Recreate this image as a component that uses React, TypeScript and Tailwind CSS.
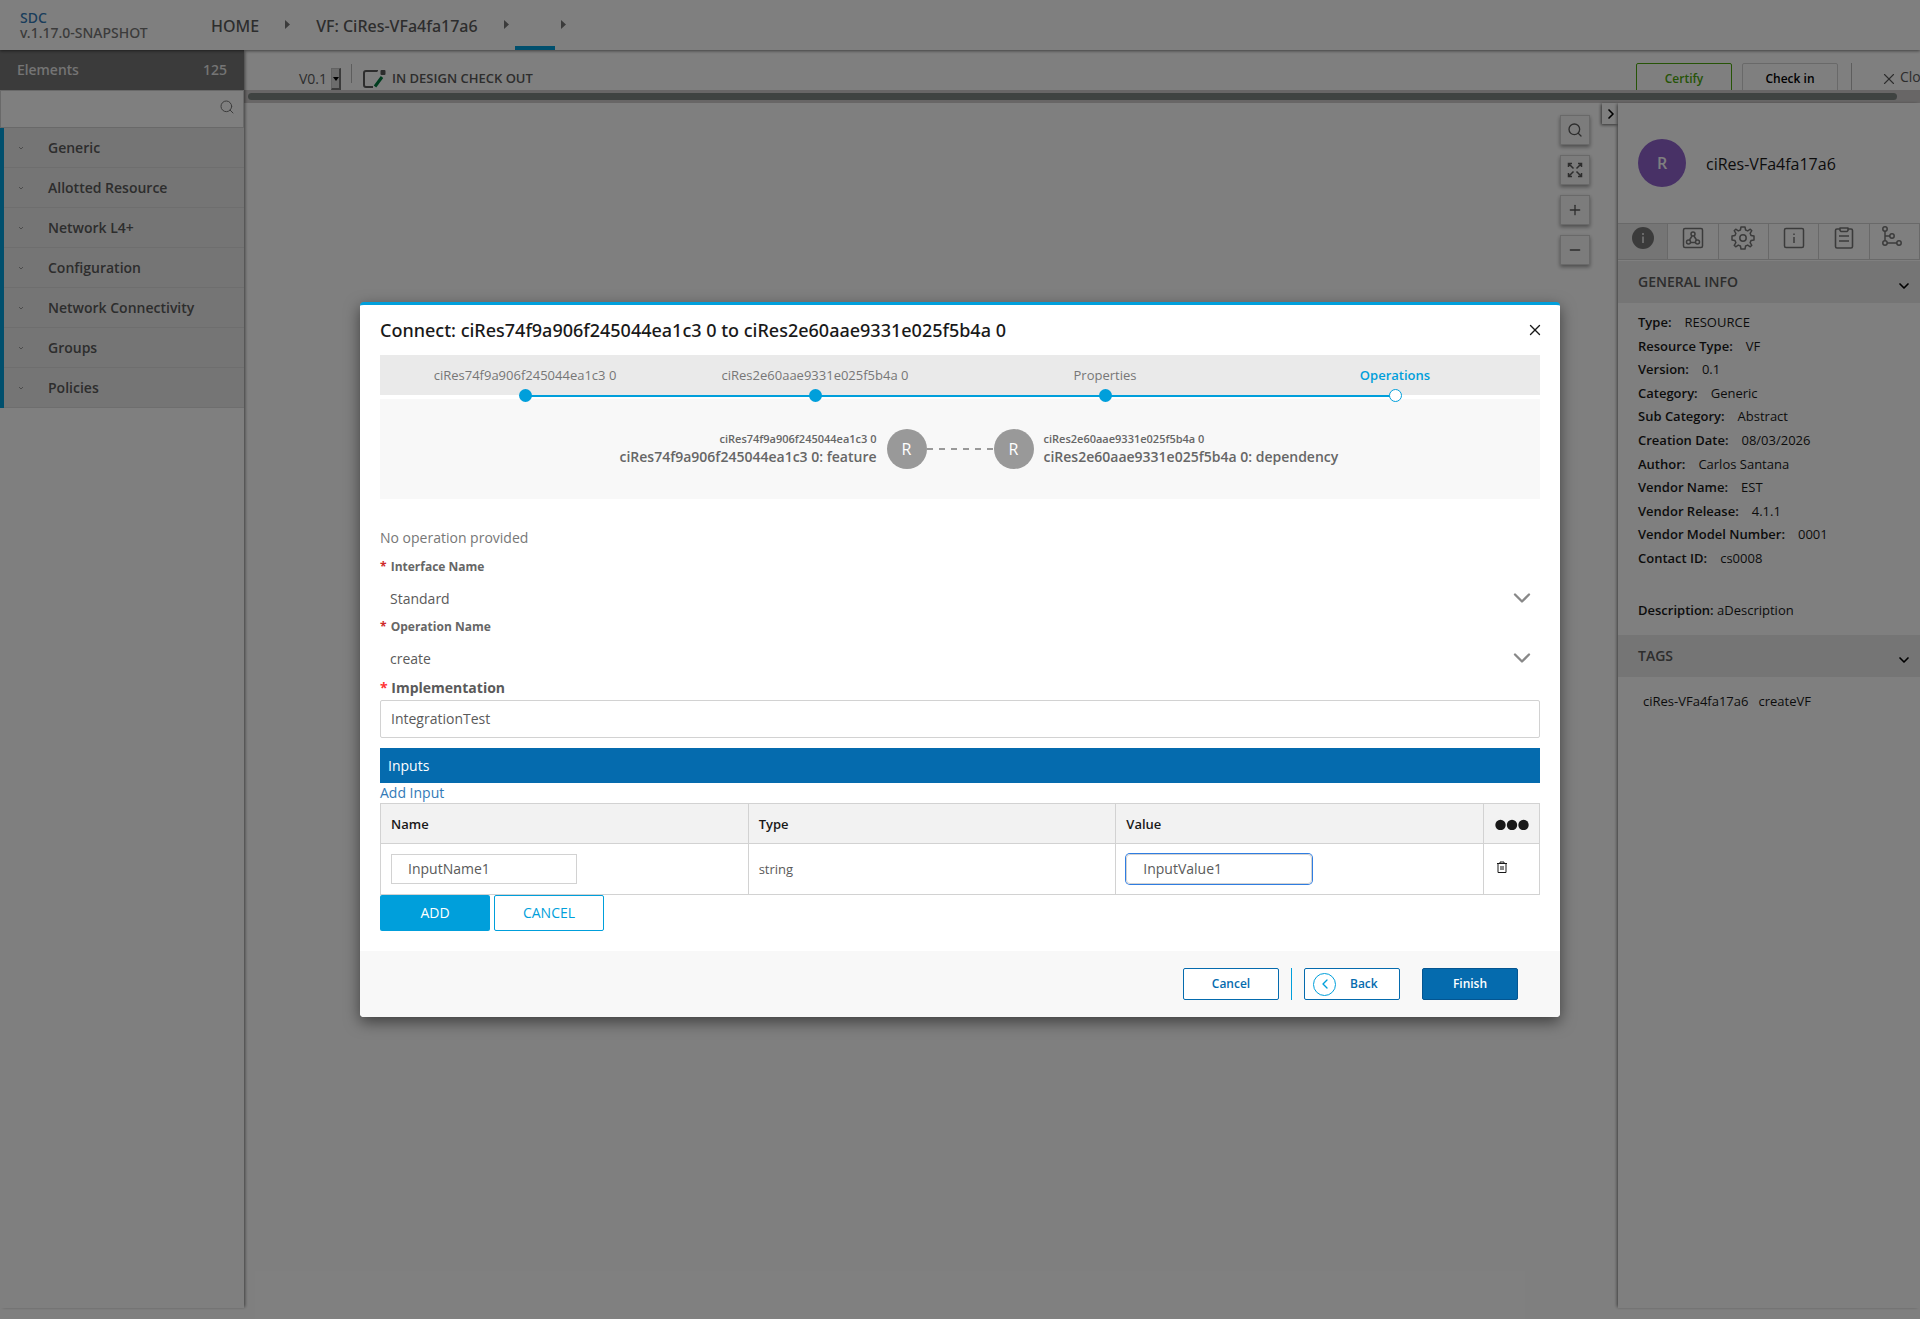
import React from 'react';
import {
  ChevronDown,
  ChevronLeft,
  ChevronRight,
  Minus,
  Plus,
  Search,
  X,
} from 'lucide-react';

const categories = [
  'Generic',
  'Allotted Resource',
  'Network L4+',
  'Configuration',
  'Network Connectivity',
  'Groups',
  'Policies',
];

const generalInfo = [
  { label: 'Type:', value: 'RESOURCE' },
  { label: 'Resource Type:', value: 'VF' },
  { label: 'Version:', value: '0.1' },
  { label: 'Category:', value: 'Generic' },
  { label: 'Sub Category:', value: 'Abstract' },
  { label: 'Creation Date:', value: '08/03/2026' },
  { label: 'Author:', value: 'Carlos Santana' },
  { label: 'Vendor Name:', value: 'EST' },
  { label: 'Vendor Release:', value: '4.1.1' },
  { label: 'Vendor Model Number:', value: '0001' },
  { label: 'Contact ID:', value: 'cs0008' },
];

const steps = [
  'ciRes74f9a906f245044ea1c3 0',
  'ciRes2e60aae9331e025f5b4a 0',
  'Properties',
  'Operations',
];

const Arrow: React.FC = () => (
  <svg className="-mt-0.5 h-[9px] w-[5px] shrink-0 fill-[#777]" viewBox="0 0 5 9">
    <path d="M0 0L5 4.500L0 9Z" />
  </svg>
);

const Header: React.FC = () => (
  <header className="relative z-20 flex h-[50px] shrink-0 items-center bg-white font-['Noto_Sans',sans-serif] font-medium shadow-[0_1px_3px_rgba(0,0,0,0.5)]">
    <div className="w-[211px] shrink-0 pl-5 text-sm leading-[15px] text-[#777]">
      <a href="#" className="block text-[#337ab7]">SDC</a>
      <span className="block">v.1.17.0-SNAPSHOT</span>
    </div>
    <nav className="flex h-full items-center text-base text-[#5a5a5a]">
      <a href="#" className="mr-[26px] pt-0.5">HOME</a>
      <Arrow />
      <a href="#" className="mx-[26px] pt-0.5">VF: CiRes-VFa4fa17a6</a>
      <Arrow />
      <span className="mx-1.5 h-full w-10 border-b-4 border-[#009fdb]" />
      <Arrow />
    </nav>
  </header>
);

const Sidebar: React.FC = () => (
  <aside className="relative z-10 flex w-[244px] shrink-0 flex-col bg-white shadow-[2px_0_3px_-1px_rgba(0,0,0,0.5)]">
    <div className="flex h-10 items-center justify-between bg-[#777] px-[17px] font-['Noto_Sans',sans-serif] text-sm font-medium text-[#eaeaea]">
      <span>Elements</span>
      <span>125</span>
    </div>
    <label className="flex h-[38px] items-center border border-[#d2d2d2] pr-2 pb-1">
      <input type="text" aria-label="Search elements" className="min-w-0 flex-1 px-3 text-sm outline-none" />
      <Search className="size-4 text-[#777]" strokeWidth={1.5} />
    </label>
    <ul className="border-l-4 border-[#009fdb]">
      {categories.map((name) => (
        <li key={name} className="flex h-10 items-center border-b border-[#dcdcdc] bg-[#eaeaea] pl-[15px] text-sm font-semibold text-[#5a5a5a]">
          <svg className="mr-[25px] h-1 w-1 fill-none stroke-[#999]" viewBox="0 0 4 4">
            <path d="M0 1L2 3L4 1" />
          </svg>
          {name}
        </li>
      ))}
    </ul>
  </aside>
);

const Toolbar: React.FC = () => (
  <div className="h-10 shrink-0 overflow-hidden">
    <div className="flex h-[57px] items-center pl-[55px]">
      <label htmlFor="version" className="text-sm text-[#5a5a5a]">V0.1</label>
      <div className="relative ml-1">
        <select id="version" className="block h-[22px] w-2.5 appearance-none border border-r-2 border-b-2 border-[#c4c4c4] border-r-[#777] border-b-[#777] bg-[#d8d8d8]" />
        <svg className="pointer-events-none absolute top-[9px] left-0.5 h-1 w-1.5 fill-black" viewBox="0 0 6 4">
          <path d="M0 0H6L3 4Z" />
        </svg>
      </div>
      <span className="mx-2.5 mb-2.5 h-[19px] w-px bg-[#bbb]" />
      <svg className="mr-1.5 h-5 w-6" viewBox="0 0 24 20" fill="none">
        <path d="M15 2.500V2H4Q2 2 2 4V16Q2 18 4 18H11" stroke="#5a5a5a" strokeWidth="2" />
        <path d="M13 17.500L20 8" stroke="#007a3e" strokeWidth="3" />
        <rect x="18.500" y="1" width="5" height="5" rx="1" fill="#5a5a5a" />
      </svg>
      <span className="text-[13px] font-semibold text-[#5a5a5a]">IN DESIGN CHECK OUT</span>
      <div className="ml-auto flex items-center">
        <button type="button" className="h-8 w-24 rounded-xs border border-[#4ca90c] text-xs font-semibold text-[#4ca90c]">Certify</button>
        <button type="button" className="ml-2.5 h-8 w-24 rounded-xs border border-[#d2d2d2] text-xs font-semibold text-black">Check in</button>
        <span className="ml-[13px] h-8 w-px bg-[#bbb]" />
        <button type="button" className="mb-1 ml-7 flex w-10 items-center gap-0.5 text-sm whitespace-nowrap text-[#5a5a5a]">
          <X className="mt-1 size-[18px] shrink-0" strokeWidth={1.5} />
          Close
        </button>
      </div>
    </div>
  </div>
);

const canvasButton =
  'flex size-[30px] items-center justify-center border border-[#d2d2d2] bg-[#f8f8f8] text-[#5a5a5a] shadow-[0_2px_4px_rgba(0,0,0,0.4)]';

const CanvasTools: React.FC = () => (
  <div className="flex flex-col gap-2.5 pt-3">
    <button type="button" aria-label="Search" className={canvasButton}>
      <Search className="size-4" strokeWidth={2} />
    </button>
    <button type="button" aria-label="Fit" className={canvasButton}>
      <svg className="size-4" viewBox="0 0 16 16" fill="none" stroke="currentColor" strokeWidth="1.500">
        <path d="M1.500 5V1.500H5M11 1.500H14.500V5M14.500 11V14.500H11M5 14.500H1.500V11M2 2L6.500 6.500M14 2L9.500 6.500M14 14L9.500 9.500M2 14L6.500 9.500" />
      </svg>
    </button>
    <button type="button" aria-label="Zoom in" className={canvasButton}>
      <Plus className="size-4" strokeWidth={2} />
    </button>
    <button type="button" aria-label="Zoom out" className={canvasButton}>
      <Minus className="size-4" strokeWidth={2} />
    </button>
  </div>
);

const tabIcons = [
  <svg key="info" className="size-6" viewBox="0 0 24 24">
    <circle cx="12" cy="12" r="11" fill="#777" />
    <path d="M12 10.500V17M12 7V9" stroke="#eaeaea" strokeWidth="1.600" />
  </svg>,
  <svg key="composition" className="size-6" viewBox="0 0 24 24" fill="none" stroke="#777" strokeWidth="1.500">
    <rect x="2.500" y="2.500" width="19" height="19" rx="1.500" />
    <circle cx="12" cy="8" r="2" />
    <circle cx="7.500" cy="16" r="2" />
    <circle cx="16.500" cy="16" r="2" />
    <path d="M11 10L8.500 14M13 10L15.500 14M9.500 16.500H14.500" />
  </svg>,
  <svg key="settings" className="size-6" viewBox="0 0 24 24" fill="none" stroke="#777" strokeWidth="1.500" strokeLinejoin="round">
    <circle cx="12" cy="12" r="3.200" />
    <path d="M10 1H14L14.600 4L16.700 4.900L19.300 3.200L20.800 4.700L19.100 7.300L20 9.400L23 10V14L20 14.600L19.100 16.700L20.800 19.300L19.300 20.800L16.700 19.100L14.600 20L14 23H10L9.400 20L7.300 19.100L4.700 20.800L3.200 19.300L4.900 16.700L4 14.600L1 14V10L4 9.400L4.900 7.300L3.200 4.700L4.700 3.200L7.300 4.900L9.400 4Z" />
  </svg>,
  <svg key="details" className="size-6" viewBox="0 0 24 24" fill="none" stroke="#777" strokeWidth="1.500">
    <rect x="2.500" y="2.500" width="19" height="19" rx="1.500" />
    <path d="M12 11V17M12 7.500V9" />
  </svg>,
  <svg key="requirements" className="size-6" viewBox="0 0 24 24" fill="none" stroke="#777" strokeWidth="1.600" strokeLinejoin="round">
    <path d="M8 3H5Q3.500 3 3.500 4.500V20.500Q3.500 22 5 22H19Q20.500 22 20.500 20.500V4.500Q20.500 3 19 3H16" />
    <path d="M8 2H16V4.500L15 5.500H9L8 4.500ZM7 10H17M7 15H17" />
  </svg>,
  <svg key="relations" className="size-6" viewBox="0 0 24 24" fill="none" stroke="#777" strokeWidth="1.500">
    <circle cx="3" cy="3" r="2.200" />
    <circle cx="3" cy="17" r="2.200" />
    <circle cx="17" cy="17" r="2.200" />
    <circle cx="10" cy="10" r="2.200" />
    <path d="M3 5V15M3 10H8M5 17H15" />
  </svg>,
];

const SectionTitle: React.FC<{ title: string }> = ({ title }) => (
  <h2 className="flex h-[42px] items-center justify-between bg-[#eaeaea] pr-2 pl-5 text-sm font-semibold text-[#5a5a5a]">
    {title}
    <ChevronDown className="mt-2 size-4 text-black" strokeWidth={2.5} />
  </h2>
);

const DetailsPanel: React.FC = () => (
  <aside className="w-[302px] shrink-0 bg-white text-[13px] text-[#191919] shadow-[-2px_0_3px_-1px_rgba(0,0,0,0.5)]">
    <div className="flex h-[120px] items-center gap-5 pl-5">
      <span className="flex size-12 items-center justify-center rounded-full bg-[#9063cd] text-base font-semibold text-white">R</span>
      <span className="pt-0.5 text-base">ciRes-VFa4fa17a6</span>
    </div>
    <div className="mb-px grid h-[37px] grid-cols-6 border-y border-[#d2d2d2]">
      {tabIcons.map((icon) => (
        <button key={icon.key} type="button" aria-label={String(icon.key)} className="flex justify-center border-r border-[#d2d2d2] pt-0.5 first:bg-[#eaeaea]">
          {icon}
        </button>
      ))}
    </div>
    <SectionTitle title="GENERAL INFO" />
    <dl className="mt-2.5 flex h-[254px] flex-col justify-between pl-5 leading-[18px]">
      {generalInfo.map((item) => (
        <div key={item.label} className="flex gap-[13px]">
          <dt className="font-semibold">{item.label}</dt>
          <dd>{item.value}</dd>
        </div>
      ))}
    </dl>
    <p className="mt-[34px] mb-4 pl-5 leading-[18px]">
      <span className="font-semibold">Description:</span> aDescription
    </p>
    <SectionTitle title="TAGS" />
    <div className="mt-[15px] flex gap-2.5 pl-[25px] leading-[18px]">
      <span>ciRes-VFa4fa17a6</span>
      <span>createVF</span>
    </div>
  </aside>
);

const Workspace: React.FC = () => (
  <main className="flex min-w-0 flex-1 flex-col">
    <Toolbar />
    <div className="h-[13px] shrink-0 bg-[#d0cdcd] py-[3px] pr-[23px] pl-1">
      <div className="h-[7px] rounded-full bg-[#7e8683]" />
    </div>
    <div className="flex min-h-0 flex-1 justify-end">
      <CanvasTools />
      <button type="button" aria-label="Collapse panel" className="ml-3 flex h-[21px] w-4 items-center bg-white pl-px text-black shadow-[-1px_1px_3px_rgba(0,0,0,0.6)]">
        <ChevronRight className="size-4 shrink-0" strokeWidth={2.5} />
      </button>
      <DetailsPanel />
    </div>
  </main>
);

const Stepper: React.FC = () => (
  <ol className="grid h-10 grid-cols-4 bg-[#eaeaea] text-[13px] text-[#777]">
    {steps.map((step, index) => {
      const last = index === steps.length - 1;
      return (
        <li key={step} className="relative pt-2.5 text-center leading-5">
          <span className={last ? 'font-semibold text-[#009fdb]' : ''}>{step}</span>
          {!last && <span className="absolute top-10 left-1/2 h-0.5 w-full bg-[#009fdb]" />}
          <span
            className={
              last
                ? 'absolute top-[34px] left-1/2 z-10 -ml-1.5 size-[13px] rounded-full border border-[#009fdb] bg-white'
                : 'absolute top-[34px] left-1/2 z-10 -ml-1.5 size-[13px] rounded-full bg-[#009fdb]'
            }
          />
        </li>
      );
    })}
  </ol>
);

const Connection: React.FC = () => (
  <div className="mt-1 flex h-[100px] items-center bg-[#f8f8f8] text-[#666]">
    <div className="flex-1 text-right">
      <div className="text-[11px] leading-4 font-semibold">ciRes74f9a906f245044ea1c3 0</div>
      <div className="text-sm font-semibold">ciRes74f9a906f245044ea1c3 0: feature</div>
    </div>
    <span className="ml-2.5 flex size-10 items-center justify-center rounded-full bg-[#999] text-base text-white">R</span>
    <svg className="h-0.5 w-[67px]" viewBox="0 0 67 2">
      <path d="M0 1H67" stroke="#999" strokeWidth="2" strokeDasharray="6 6" />
    </svg>
    <span className="mr-2.5 flex size-10 items-center justify-center rounded-full bg-[#999] text-base text-white">R</span>
    <div className="flex-1">
      <div className="text-[11px] leading-4 font-semibold">ciRes2e60aae9331e025f5b4a 0</div>
      <div className="text-sm font-semibold">ciRes2e60aae9331e025f5b4a 0: dependency</div>
    </div>
  </div>
);

interface DropdownProps {
  id: string;
  label: string;
  value: string;
}

const Dropdown: React.FC<DropdownProps> = ({ id, label, value }) => (
  <div className="h-[60px]">
    <label htmlFor={id} className="block text-xs leading-5 font-bold text-[#666]">
      <span className="mr-px text-[#cf2a2a]">*</span> {label}
    </label>
    <div className="relative">
      <select id={id} defaultValue={value} className="mt-1 h-9 w-full appearance-none bg-white px-2.5 text-sm text-[#5a5a5a] outline-none">
        <option>{value}</option>
      </select>
      <ChevronDown className="pointer-events-none absolute top-[7px] right-1 size-7 text-[#888]" strokeWidth={2} />
    </div>
  </div>
);

const InputsTable: React.FC = () => (
  <table className="w-full table-fixed border-collapse text-left text-[13px] text-[#5a5a5a]">
    <thead>
      <tr className="h-10 bg-[#f2f2f2] text-[#191919]">
        <th className="border border-[#d2d2d2] px-2.5 pt-0.5 font-semibold">Name</th>
        <th className="border border-[#d2d2d2] px-2.5 pt-0.5 font-semibold">Type</th>
        <th className="border border-[#d2d2d2] px-2.5 pt-0.5 font-semibold">Value</th>
        <th className="w-14 border border-[#d2d2d2]">
          <svg className="mx-auto h-3 w-[34px] fill-[#191919]" viewBox="0 0 34 12">
            <circle cx="5.500" cy="7" r="5.200" />
            <circle cx="17" cy="7" r="5.200" />
            <circle cx="28.500" cy="7" r="5.200" />
          </svg>
        </th>
      </tr>
    </thead>
    <tbody>
      <tr className="h-[51px]">
        <td className="border border-[#d2d2d2] px-2.5">
          <input aria-label="Name" defaultValue="InputName1" className="block h-[30px] w-[186px] border border-[#d2d2d2] px-4 pb-0.5 text-sm outline-none" />
        </td>
        <td className="border border-[#d2d2d2] px-2.5 pt-0.5">string</td>
        <td className="border border-[#d2d2d2] px-2.5">
          <input aria-label="Value" defaultValue="InputValue1" className="block h-[30px] w-[186px] rounded-sm border border-[#d2d2d2] px-4 pb-0.5 text-sm ring-1 ring-[#2f7de1] outline-none" />
        </td>
        <td className="border border-[#d2d2d2] px-3 pb-1">
          <button type="button" aria-label="Delete input" className="block">
            <svg className="h-3 w-3" viewBox="0 0 12 12" fill="none" stroke="#191919">
              <path d="M1 2.500H11M4 2V1H8V2M2 3V11.500H10V3" />
              <path d="M4 5H8V9H4Z" fill="#888" stroke="none" />
            </svg>
          </button>
        </td>
      </tr>
    </tbody>
  </table>
);

const ConnectDialog: React.FC = () => (
  <div
    role="dialog"
    aria-labelledby="dialog-title"
    className="w-[1200px] overflow-hidden rounded border-t-[3px] border-[#009fdb] bg-white"
  >
    <div className="flex h-[50px] items-center justify-between pr-4 pl-5">
      <h1 id="dialog-title" className="font-['Noto_Sans',sans-serif] text-lg font-medium text-[#191919]">
        Connect: ciRes74f9a906f245044ea1c3 0 to ciRes2e60aae9331e025f5b4a 0
      </h1>
      <button type="button" aria-label="Close dialog">
        <X className="size-[18px] text-[#191919]" strokeWidth={1.8} />
      </button>
    </div>
    <div className="px-5 pb-5">
      <Stepper />
      <Connection />
      <p className="mt-[29px] text-sm text-[#777]">No operation provided</p>
      <div className="mt-[9px]">
        <Dropdown id="interface-name" label="Interface Name" value="Standard" />
        <Dropdown id="operation-name" label="Operation Name" value="create" />
      </div>
      <label htmlFor="implementation" className="mt-px block text-sm font-bold text-[#5a5a5a]">
        <span className="text-[#f33]">*</span> Implementation
      </label>
      <input
        id="implementation"
        defaultValue="IntegrationTest"
        className="mt-0.5 block h-[38px] w-full rounded-xs border border-[#d2d2d2] px-2.5 pb-0.5 text-sm text-[#5a5a5a] outline-none"
      />
      <h2 className="mt-2.5 h-[35px] bg-[#056bae] px-2 text-sm leading-[35px] text-white">Inputs</h2>
      <a href="#" className="block text-sm text-[#337ab7]">Add Input</a>
      <InputsTable />
      <div className="flex gap-1">
        <button type="button" className="h-9 w-[110px] rounded-xs bg-[#009fdb] text-sm text-white">ADD</button>
        <button type="button" className="h-9 w-[110px] rounded-xs border border-[#009fdb] text-sm text-[#009fdb]">CANCEL</button>
      </div>
    </div>
    <div className="flex h-[66px] items-center justify-end bg-[#f8f8f8] pr-[42px] text-xs font-semibold text-[#056bae]">
      <button type="button" className="h-8 w-24 rounded-xs border border-[#056bae] bg-white">Cancel</button>
      <span className="mx-3 h-8 w-px bg-[#009fdb]" />
      <button type="button" className="flex h-8 w-24 items-center gap-3.5 rounded-xs border border-[#056bae] bg-white pl-2">
        <span className="flex size-[23px] items-center justify-center rounded-full border border-[#009fdb] text-[#009fdb]">
          <ChevronLeft className="size-4" strokeWidth={2} />
        </span>
        Back
      </button>
      <button type="button" className="ml-[22px] h-8 w-24 rounded-xs border border-[#045591] bg-[#056bae] text-white">Finish</button>
    </div>
  </div>
);

const App: React.FC = () => (
  <div className="relative flex h-screen flex-col overflow-hidden bg-white font-['Open_Sans',sans-serif]">
    <Header />
    <div className="mb-[11px] flex min-h-0 flex-1">
      <Sidebar />
      <Workspace />
    </div>
    <div className="absolute inset-0 z-30 flex items-center justify-center bg-black/50">
      <div className="rounded shadow-[0_5px_15px_rgba(0,0,0,0.5)]">
        <ConnectDialog />
      </div>
    </div>
  </div>
);

export default App;
